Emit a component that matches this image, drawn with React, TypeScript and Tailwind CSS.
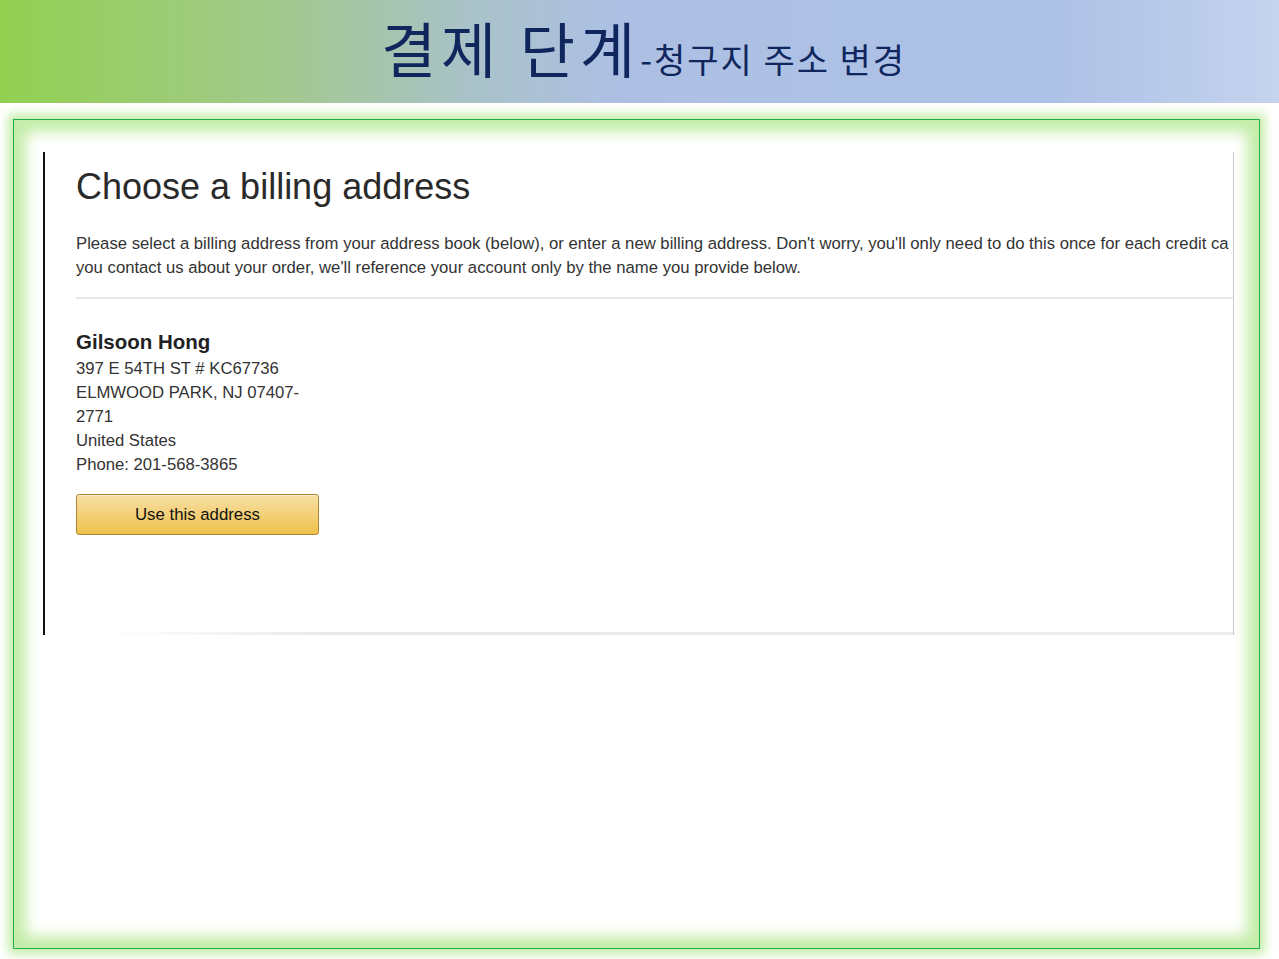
import React from 'react';

const korean = { fontFamily: '"Noto Sans CJK KR", "Noto Sans", sans-serif' };
const arial = { fontFamily: '"Liberation Sans", Arial, sans-serif' };

// Slide header with the step title
const SlideHeader: React.FC = () => (
  <div className="h-[103px] w-full bg-[linear-gradient(90deg,#92d050_0%,#a2c98e_22%,#a9c2c6_36%,#adc0e4_48%,#adc1e6_82%,#c4d3ee_100%)] flex items-center justify-center">
    <h1 className="text-[#10275e] flex items-baseline mt-[-10px] ml-[8px] leading-none" style={korean}>
      <span className="text-[60px] tracking-[5px]">결제 단계</span>
      <span className="text-[34px] tracking-[2px]">-청구지 주소 변경</span>
    </h1>
  </div>
);

// Amazon-style billing address card (screenshot inside the slide)
const BillingCapture: React.FC = () => (
  <div className="ml-[29px] mt-[32px] w-[1191px] h-[483px] border-l-2 border-l-[#111] border-r border-r-[#c8c8c8] relative overflow-hidden text-[#333]" style={arial}>
    <div className="pl-[31px] pt-[13px]">
      <h2 className="text-[36px] leading-[44px] text-[#2a2a2a]">Choose a billing address</h2>
      <p className="mt-[23px] text-[16.7px] leading-[24px] whitespace-nowrap">
        Please select a billing address from your address book (below), or enter a new billing address. Don't worry, you'll only need to do this once for each credit ca
        <br />
        you contact us about your order, we'll reference your account only by the name you provide below.
      </p>
      <div className="mt-[17px] h-[2px] bg-[#e7e7e7]" />
      <div className="mt-[28px] text-[16.7px] leading-[24px]">
        <div className="font-bold text-[20.5px] leading-[30px] text-[#222]">Gilsoon Hong</div>
        <div>397 E 54TH ST # KC67736</div>
        <div>ELMWOOD PARK, NJ 07407-</div>
        <div>2771</div>
        <div>United States</div>
        <div>Phone: 201-568-3865</div>
      </div>
      <button className="mt-[17px] w-[243px] h-[41px] rounded-[3px] border border-[#a88734] bg-[linear-gradient(180deg,#f7dfa5,#f0c14b)] text-[16.8px] text-[#111] shadow-[inset_0_1px_0_rgba(255,255,255,0.4)]">
        Use this address
      </button>
    </div>
    <div className="absolute left-[60px] right-0 bottom-0 h-[3px] bg-[linear-gradient(90deg,rgba(230,230,230,0),#e9e9e9_20%,#ececec)]" />
  </div>
);

export default function App() {
  return (
    <div className="w-[1279px] h-[959px] bg-white overflow-hidden">
      <SlideHeader />
      <div className="pt-[16px] px-[13px]">
        <div className="w-[1247px] h-[830px] border border-[#1fae47] bg-white shadow-[0_0_10px_5px_#c4eda8,inset_0_0_14px_12px_#c4eda8]">
          <BillingCapture />
        </div>
      </div>
    </div>
  );
}
